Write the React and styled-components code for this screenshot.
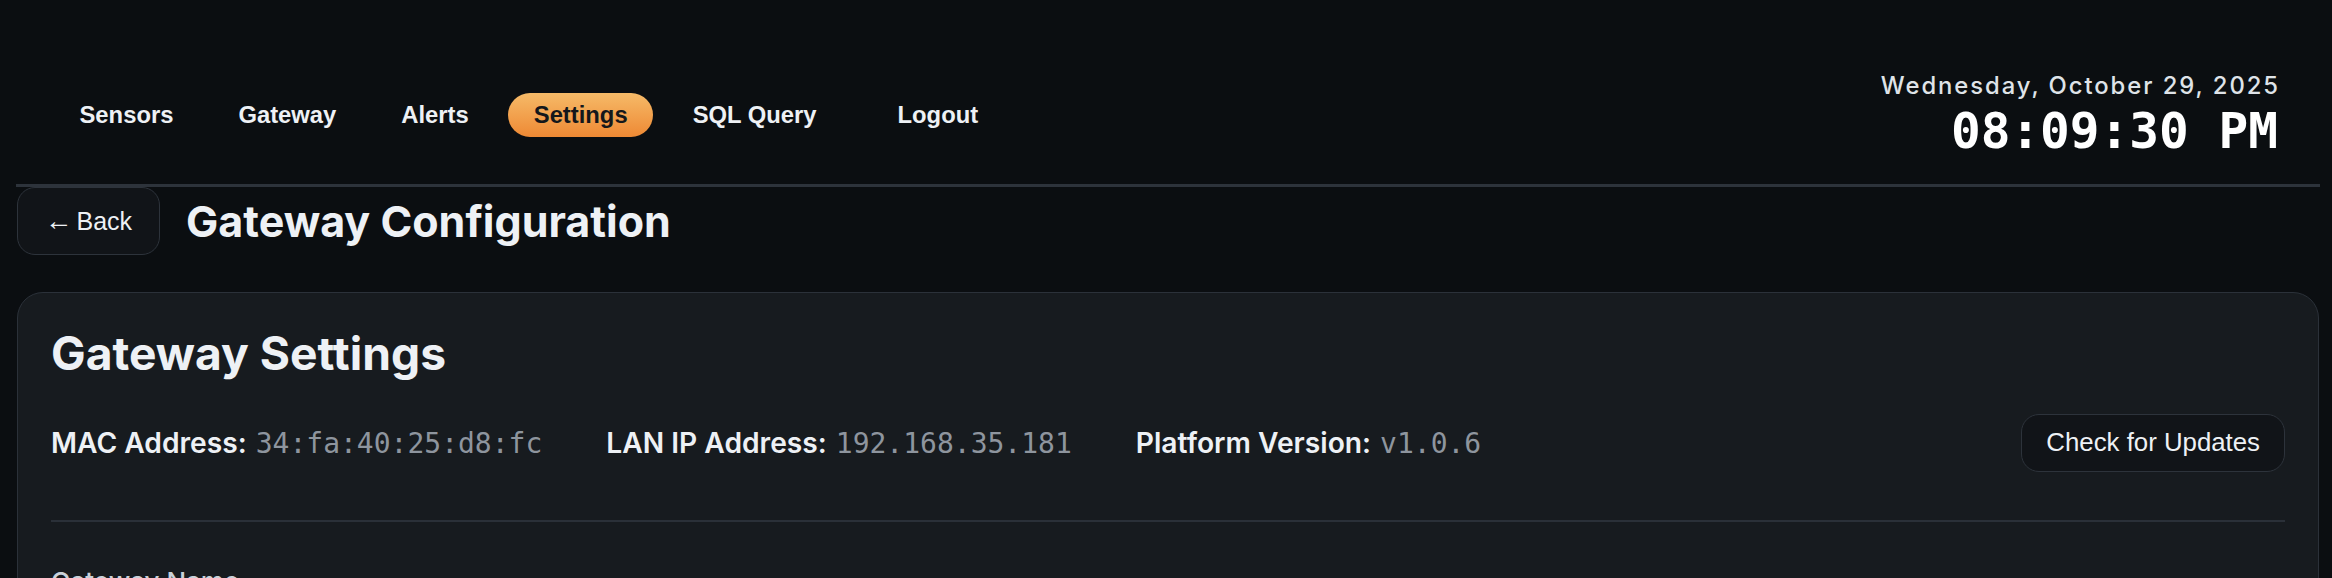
import React from 'react';
import styled, { createGlobalStyle } from 'styled-components';

const GlobalStyle = createGlobalStyle`
  html, body {
    margin: 0;
    overflow: hidden;
    background: #0b0e11;
  }
  body {
    font-family: Inter, "Noto Sans", sans-serif;
    color: #e6edf3;
  }
`;

const Page = styled.div`
  padding: 0 12px 0 16px;
`;

const Header = styled.header`
  display: flex;
  align-items: center;
  justify-content: space-between;
  height: 140px;
  padding-top: 44px;
  border-bottom: 3px solid #2d333b;
`;

const Nav = styled.nav`
  display: flex;
  align-items: center;
  gap: 14px;
  padding-left: 38px;
  margin-top: 2px;
`;

const NavItem = styled.button`
  font-family: "Liberation Sans", Arial, sans-serif;
  font-weight: 700;
  font-size: 23.8px;
  line-height: 28px;
  padding: 8px 25.5px;
  margin-left: ${(p) => (p.$spaced ? '16px' : '0')};
  border: none;
  border-radius: 999px;
  color: ${(p) => (p.$active ? '#14171b' : '#eef1f5')};
  background: ${(p) => (p.$active ? 'linear-gradient(180deg, #f6ba68 0%, #ee8934 100%)' : 'transparent')};
  cursor: pointer;
`;

const Clock = styled.div`
  display: flex;
  flex-direction: column;
  align-items: flex-end;
  margin-right: 42px;
  margin-top: 1px;
`;

const DateText = styled.div`
  font-size: 23.8px;
  font-weight: 500;
  letter-spacing: 1.95px;
  margin-right: -2px;
  color: #dfe3e8;
  line-height: 30px;
`;

const TimeText = styled.div`
  font-family: "DejaVu Sans Mono", monospace;
  font-weight: 700;
  font-size: 49.4px;
  line-height: 56px;
  color: #ffffff;
  margin-top: 2px;
`;

const TitleRow = styled.div`
  display: flex;
  align-items: center;
  gap: 26px;
  padding-left: 1px;
`;

const GhostButton = styled.button`
  font-family: "Liberation Sans", Arial, sans-serif;
  font-size: ${(p) => p.$size || '24px'};
  line-height: 1.15;
  color: #eef1f5;
  background: #111418;
  border: 1.5px solid #2d333b;
  border-radius: 18px;
  padding: ${(p) => p.$pad || '17px 25px'};
  cursor: pointer;
`;

const Arrow = styled.span`
  font-size: 1.1em;
  margin-right: 4px;
`;

const PageTitle = styled.h1`
  margin: 0;
  font-size: 43px;
  font-weight: 700;
  color: #eef1f5;
`;

const Card = styled.section`
  margin-top: 37px;
  margin-left: 1px;
  margin-right: 1px;
  background: #171b1f;
  border: 1.5px solid #2b3139;
  border-radius: 26px;
  padding: 33px 33px 0;
  min-height: 400px;
`;

const CardTitle = styled.h2`
  margin: 0;
  font-size: 46.2px;
  font-weight: 700;
  line-height: 1.2;
  color: #eef1f5;
`;

const InfoRow = styled.div`
  display: flex;
  align-items: center;
  gap: 64px;
  margin-top: 33px;
  padding-bottom: 48px;
  border-bottom: 2px solid #2a3038;
`;

const Info = styled.div`
  display: flex;
  align-items: baseline;
  gap: 9px;
`;

const Label = styled.span`
  font-size: 28.2px;
  font-weight: 600;
  color: #eef1f5;
`;

const Value = styled.span`
  font-family: "DejaVu Sans Mono", monospace;
  font-size: 28px;
  color: #8e959e;
`;

const Push = styled.div`
  margin-left: auto;
`;

const SectionLabel = styled.div`
  margin-top: 44px;
  font-size: 26px;
  font-weight: 500;
  color: #c9d1d9;
`;

const navLinks = ['Sensors', 'Gateway', 'Alerts', 'Settings', 'SQL Query'];

export default function App() {
  return (
    <Page>
      <GlobalStyle />
      <Header>
        <Nav>
          {navLinks.map((link) => (
            <NavItem key={link} $active={link === 'Settings'}>
              {link}
            </NavItem>
          ))}
          <NavItem $spaced>Logout</NavItem>
        </Nav>
        <Clock>
          <DateText>Wednesday, October 29, 2025</DateText>
          <TimeText>08:09:30 PM</TimeText>
        </Clock>
      </Header>

      <TitleRow>
        <GhostButton $size="25px" $pad="17px 27px">
          <Arrow>←</Arrow>Back
        </GhostButton>
        <PageTitle>Gateway Configuration</PageTitle>
      </TitleRow>

      <Card>
        <CardTitle>Gateway Settings</CardTitle>
        <InfoRow>
          <Info>
            <Label>MAC Address:</Label>
            <Value>34:fa:40:25:d8:fc</Value>
          </Info>
          <Info>
            <Label>LAN IP Address:</Label>
            <Value>192.168.35.181</Value>
          </Info>
          <Info>
            <Label>Platform Version:</Label>
            <Value>v1.0.6</Value>
          </Info>
          <Push>
            <GhostButton $size="25.8px" $pad="13px 24px">Check for Updates</GhostButton>
          </Push>
        </InfoRow>
        <SectionLabel>Gateway Name</SectionLabel>
      </Card>
    </Page>
  );
}
